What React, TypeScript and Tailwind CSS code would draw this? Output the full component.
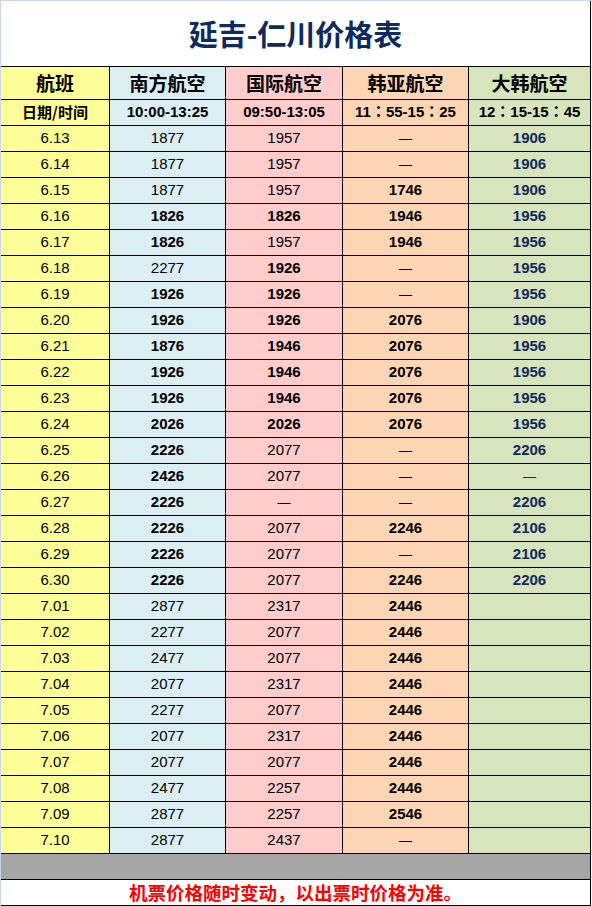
import React from "react";

type Cell = { v: string; b?: boolean };

const raw: [string, string, string, string, string][] = [
  ["6.13", "1877", "1957", "—", "1906"],
  ["6.14", "1877", "1957", "—", "1906"],
  ["6.15", "1877", "1957", "*1746", "1906"],
  ["6.16", "*1826", "*1826", "*1946", "1956"],
  ["6.17", "*1826", "1957", "*1946", "1956"],
  ["6.18", "2277", "*1926", "—", "1956"],
  ["6.19", "*1926", "*1926", "—", "1956"],
  ["6.20", "*1926", "*1926", "*2076", "1906"],
  ["6.21", "*1876", "*1946", "*2076", "1956"],
  ["6.22", "*1926", "*1946", "*2076", "1956"],
  ["6.23", "*1926", "*1946", "*2076", "1956"],
  ["6.24", "*2026", "*2026", "*2076", "1956"],
  ["6.25", "*2226", "2077", "—", "2206"],
  ["6.26", "*2426", "2077", "—", "—"],
  ["6.27", "*2226", "—", "—", "2206"],
  ["6.28", "*2226", "2077", "*2246", "2106"],
  ["6.29", "*2226", "2077", "—", "2106"],
  ["6.30", "*2226", "2077", "*2246", "2206"],
  ["7.01", "2877", "2317", "*2446", ""],
  ["7.02", "2277", "2077", "*2446", ""],
  ["7.03", "2477", "2077", "*2446", ""],
  ["7.04", "2077", "2317", "*2446", ""],
  ["7.05", "2277", "2077", "*2446", ""],
  ["7.06", "2077", "2317", "*2446", ""],
  ["7.07", "2077", "2077", "*2446", ""],
  ["7.08", "2477", "2257", "*2446", ""],
  ["7.09", "2877", "2257", "*2546", ""],
  ["7.10", "2877", "2437", "—", ""],
];

const parse = (s: string): Cell =>
  s.startsWith("*") ? { v: s.slice(1), b: true } : { v: s };

const cjk = "font-['Noto_Sans_CJK_SC','Noto_Sans',sans-serif]";
const num = "font-['Liberation_Sans','Noto_Sans_CJK_SC',sans-serif]";
const numTc = "font-['Liberation_Sans','Noto_Sans_CJK_TC',sans-serif]";

function NumText({ c, navy }: { c: Cell; navy?: boolean }) {
  if (c.v === "—") {
    return (
      <span className={`${num} text-[13px] ${navy ? "text-[#0f2a5c]" : "text-black"}`}>—</span>
    );
  }
  if (navy) {
    return <span className={`${num} text-[15px] font-bold text-[#0f2a5c]`}>{c.v}</span>;
  }
  return c.b ? (
    <span className={`${num} text-[15px] font-bold text-black`}>{c.v}</span>
  ) : (
    <span className={`${num} text-[15px] text-black`}>{c.v}</span>
  );
}

export default function App() {
  return (
    <div className="w-[592px] h-[906px] bg-white border-t border-[#cdd6e6] overflow-hidden">
      <div className="w-[591px] border-l border-l-[#cdd6e6] border-r border-r-black">
        <div className="h-[65px] flex items-center justify-center">
          <span className={`${cjk} text-[29px] font-bold text-[#0f2a5c] leading-none`}>
            延吉-仁川价格表
          </span>
        </div>
        <div className="border-t border-black">
          {/* header row */}
          <div className="flex h-[33px] border-b border-black">
            <div className="w-[109px] bg-[#ffff99] border-r border-black flex items-center justify-center">
              <span className={`${cjk} text-[19px] font-bold text-black`}>航班</span>
            </div>
            <div className="w-[116px] bg-[#daeef3] border-r border-black flex items-center justify-center">
              <span className={`${cjk} text-[19px] font-bold text-black`}>南方航空</span>
            </div>
            <div className="w-[117px] bg-[#ffcccc] border-r border-black flex items-center justify-center">
              <span className={`${cjk} text-[19px] font-bold text-black`}>国际航空</span>
            </div>
            <div className="w-[126px] bg-[#fcd5b4] border-r border-black flex items-center justify-center">
              <span className={`${cjk} text-[19px] font-bold text-black`}>韩亚航空</span>
            </div>
            <div className="w-[121px] bg-[#d8e4bc] flex items-center justify-center">
              <span className={`${cjk} text-[19px] font-bold text-black`}>大韩航空</span>
            </div>
          </div>
          {/* sub header */}
          <div className="flex h-[26px] border-b border-black">
            <div className="w-[109px] bg-[#ffff99] border-r border-black flex items-center justify-center">
              <span className={`${cjk} text-[15px] font-bold text-black`}>日期/时间</span>
            </div>
            <div className="w-[116px] bg-[#daeef3] border-r border-black flex items-center justify-center">
              <span className={`${num} text-[15px] font-bold text-black`}>10:00-13:25</span>
            </div>
            <div className="w-[117px] bg-[#ffcccc] border-r border-black flex items-center justify-center">
              <span className={`${num} text-[15px] font-bold text-black`}>09:50-13:05</span>
            </div>
            <div className="w-[126px] bg-[#fcd5b4] border-r border-black flex items-center justify-center">
              <span className={`${numTc} text-[15px] font-bold text-black whitespace-nowrap`}>11：55-15：25</span>
            </div>
            <div className="w-[121px] bg-[#d8e4bc] flex items-center justify-center">
              <span className={`${numTc} text-[15px] font-bold text-black whitespace-nowrap`}>12：15-15：45</span>
            </div>
          </div>
          {raw.map((r) => {
            const [d, a, b, c, e] = r;
            return (
              <div key={d} className="flex h-[26px] border-b border-black">
                <div className="w-[109px] bg-[#ffff99] border-r border-black flex items-center justify-center">
                  <span className={`${num} text-[15px] text-black`}>{d}</span>
                </div>
                <div className="w-[116px] bg-[#daeef3] border-r border-black flex items-center justify-center">
                  <NumText c={parse(a)} />
                </div>
                <div className="w-[117px] bg-[#ffcccc] border-r border-black flex items-center justify-center">
                  <NumText c={parse(b)} />
                </div>
                <div className="w-[126px] bg-[#fcd5b4] border-r border-black flex items-center justify-center">
                  <NumText c={parse(c)} />
                </div>
                <div className="w-[121px] bg-[#d8e4bc] flex items-center justify-center">
                  {e ? <NumText c={parse(e)} navy /> : null}
                </div>
              </div>
            );
          })}
          <div className="h-[26px] bg-[#a6a6a6] border-b border-black" />
          <div className="h-[26px] border-b border-black flex items-center justify-center">
            <span className={`${cjk} text-[18.5px] font-bold text-[#ff0000] leading-none`}>
              机票价格随时变动，以出票时价格为准。
            </span>
          </div>
        </div>
      </div>
    </div>
  );
}
